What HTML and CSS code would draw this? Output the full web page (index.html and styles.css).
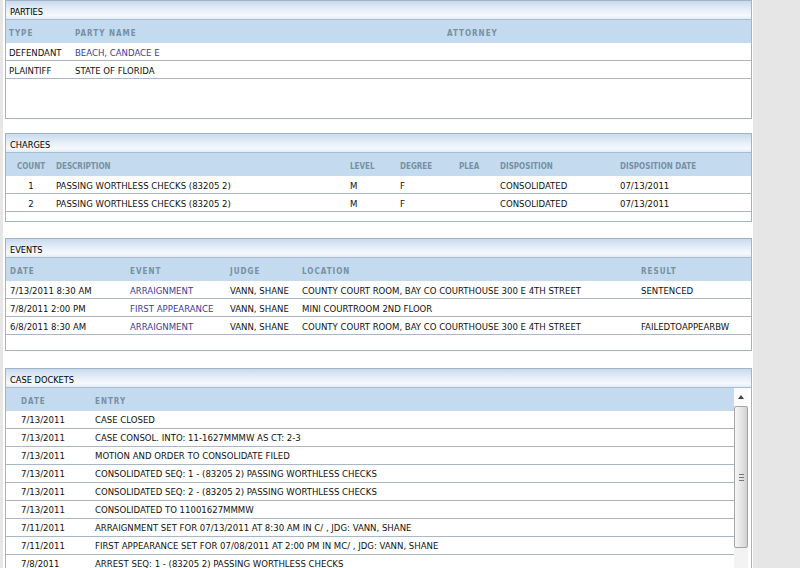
FILE: index.html
```html
<!DOCTYPE html>
<html>
<head>
	<meta charset="utf-8">
	<title>Case Detail</title>
	<link rel="stylesheet" href="styles.css">
</head>
<body>
	<div class="page">

		<div class="panel parties">
			<div class="panel-title">PARTIES</div>
			<div class="panel-body">
				<table class="grid">
					<tr class="head spaced">
						<th class="p-type">TYPE</th>
						<th class="p-name">PARTY NAME</th>
						<th>ATTORNEY</th>
					</tr>
					<tr>
						<td>DEFENDANT</td>
						<td><a href="#">BEACH, CANDACE E</a></td>
						<td></td>
					</tr>
					<tr>
						<td>PLAINTIFF</td>
						<td>STATE OF FLORIDA</td>
						<td></td>
					</tr>
				</table>
			</div>
		</div>

		<div class="panel charges">
			<div class="panel-title">CHARGES</div>
			<div class="panel-body">
				<table class="grid">
					<tr class="head">
						<th class="c-count">COUNT</th>
						<th class="c-desc">DESCRIPTION</th>
						<th class="c-level">LEVEL</th>
						<th class="c-degree">DEGREE</th>
						<th class="c-plea">PLEA</th>
						<th class="c-disp">DISPOSITION</th>
						<th>DISPOSITION DATE</th>
					</tr>
					<tr>
						<td class="c-count">1</td>
						<td>PASSING WORTHLESS CHECKS (83205 2)</td>
						<td>M</td>
						<td>F</td>
						<td></td>
						<td>CONSOLIDATED</td>
						<td>07/13/2011</td>
					</tr>
					<tr>
						<td class="c-count">2</td>
						<td>PASSING WORTHLESS CHECKS (83205 2)</td>
						<td>M</td>
						<td>F</td>
						<td></td>
						<td>CONSOLIDATED</td>
						<td>07/13/2011</td>
					</tr>
				</table>
			</div>
		</div>

		<div class="panel events">
			<div class="panel-title">EVENTS</div>
			<div class="panel-body">
				<table class="grid">
					<tr class="head spaced">
						<th class="e-date">DATE</th>
						<th class="e-event">EVENT</th>
						<th class="e-judge">JUDGE</th>
						<th class="e-loc">LOCATION</th>
						<th>RESULT</th>
					</tr>
					<tr>
						<td class="e-date">7/13/2011 8:30 AM</td>
						<td><a href="#">ARRAIGNMENT</a></td>
						<td>VANN, SHANE</td>
						<td>COUNTY COURT ROOM, BAY CO COURTHOUSE 300 E 4TH STREET</td>
						<td>SENTENCED</td>
					</tr>
					<tr>
						<td class="e-date">7/8/2011 2:00 PM</td>
						<td><a href="#">FIRST APPEARANCE</a></td>
						<td>VANN, SHANE</td>
						<td>MINI COURTROOM 2ND FLOOR</td>
						<td></td>
					</tr>
					<tr>
						<td class="e-date">6/8/2011 8:30 AM</td>
						<td><a href="#">ARRAIGNMENT</a></td>
						<td>VANN, SHANE</td>
						<td>COUNTY COURT ROOM, BAY CO COURTHOUSE 300 E 4TH STREET</td>
						<td>FAILEDTOAPPEARBW</td>
					</tr>
				</table>
			</div>
		</div>

		<div class="panel dockets">
			<div class="panel-title">CASE DOCKETS</div>
			<div class="docket-body">
				<div class="docket-list">
					<table class="grid">
						<tr class="head spaced">
							<th class="d-date">DATE</th>
							<th>ENTRY</th>
						</tr>
						<tr><td class="d-date">7/13/2011</td><td>CASE CLOSED</td></tr>
						<tr><td class="d-date">7/13/2011</td><td>CASE CONSOL. INTO: 11-1627MMMW AS CT: 2-3</td></tr>
						<tr><td class="d-date">7/13/2011</td><td>MOTION AND ORDER TO CONSOLIDATE FILED</td></tr>
						<tr><td class="d-date">7/13/2011</td><td>CONSOLIDATED SEQ: 1 - (83205 2) PASSING WORTHLESS CHECKS</td></tr>
						<tr><td class="d-date">7/13/2011</td><td>CONSOLIDATED SEQ: 2 - (83205 2) PASSING WORTHLESS CHECKS</td></tr>
						<tr><td class="d-date">7/13/2011</td><td>CONSOLIDATED TO 11001627MMMW</td></tr>
						<tr><td class="d-date">7/11/2011</td><td>ARRAIGNMENT SET FOR 07/13/2011 AT 8:30 AM IN C/ , JDG: VANN, SHANE</td></tr>
						<tr><td class="d-date">7/11/2011</td><td>FIRST APPEARANCE SET FOR 07/08/2011 AT 2:00 PM IN MC/ , JDG: VANN, SHANE</td></tr>
						<tr><td class="d-date">7/8/2011</td><td>ARREST SEQ: 1 - (83205 2) PASSING WORTHLESS CHECKS</td></tr>
					</table>
				</div>
				<div class="scrollbar">
					<div class="scroll-up"><span class="arrow"></span></div>
					<div class="scroll-thumb"><span class="grip"></span></div>
					<div class="scroll-track"></div>
				</div>
			</div>
		</div>

	</div>
</body>
</html>
```

FILE: styles.css
```css
*{
	padding: 0px;
	margin: 0px;
}
html, body{
	height: 568px;
	overflow: hidden;
}
body{
	background: #e6e6e6;
	font-family: "DejaVu Sans Condensed", "DejaVu Sans", sans-serif;
	font-stretch: condensed;
	font-size: 9.5px;
	color: #000;
}
.page{
	width: 750px;
	height: 568px;
	margin-left: 3px;
	padding-left: 2px;
	box-sizing: border-box;
	background: #fff;
}
.panel{
	width: 747px;
	box-sizing: border-box;
	border: 1px solid #9fb3c9;
	background: #fff;
}
.charges{
	margin-top: 14px;
}
.events{
	margin-top: 16px;
}
.dockets{
	margin-top: 17px;
}
.panel-title{
	height: 16px;
	padding-top: 2px;
	line-height: 18px;
	padding-left: 4px;
	font-size: 9.2px;
	border-bottom: 1px solid #a9bcd1;
	background: linear-gradient(to bottom, #c9dbef 0%, #e4edf7 45%, #f5f9fd 80%, #e2ebf5 100%);
}
.parties .panel-body{
	height: 98px;
}
.charges .panel-body{
	height: 68px;
}
.events .panel-body{
	height: 92px;
}

/* tables */
.grid{
	width: 100%;
	border-collapse: separate;
	border-spacing: 0;
}
.grid th{
	height: 20px;
	padding: 3px 3px 0 3px;
	text-align: left;
	font-size: 8px;
	font-weight: bold;
	color: #7890a2;
	background: #c3daef;
	white-space: nowrap;
}
.grid .spaced th{
	letter-spacing: 1px;
}
.grid td{
	line-height: 15px;
	padding: 2px 3px 0 3px;
	border-bottom: 1px solid #a8b8c9;
	white-space: nowrap;
	color: #111;
}
.grid a{
	color: #3c3c9a;
	text-decoration: none;
}

/* parties */
.p-type{
	width: 60px;
}
.p-name{
	width: 366px;
}

/* charges */
.grid .c-count{
	width: 38px;
	text-align: center;
	padding-left: 6px;
}
.c-desc{
	width: 288px;
}
.c-level{
	width: 44px;
}
.c-degree{
	width: 53px;
}
.c-plea{
	width: 35px;
}
.c-disp{
	width: 114px;
}

/* events */
.grid .e-date{
	width: 114px;
	padding-left: 4px;
}
.e-event{
	width: 94px;
}
.e-judge{
	width: 66px;
}
.e-loc{
	width: 333px;
}

/* dockets */
.docket-body{
	display: flex;
	height: 200px;
	overflow: hidden;
	padding-right: 3px;
}
.docket-list{
	flex: 1;
	overflow: hidden;
}
.docket-list td{
	padding-top: 1px;
	line-height: 16px;
}
.grid .d-date{
	width: 68px;
	padding-left: 15px;
}
.scrollbar{
	width: 14px;
	display: flex;
	flex-direction: column;
	background: #f3f3f3;
}
.scroll-up{
	height: 18px;
	display: flex;
	justify-content: center;
	align-items: center;
	background: #fafafa;
}
.arrow{
	width: 0;
	height: 0;
	border-left: 3px solid transparent;
	border-right: 3px solid transparent;
	border-bottom: 4px solid #444;
}
.scroll-thumb{
	height: 140px;
	border: 1px solid #a5a5a5;
	border-radius: 2px;
	background: linear-gradient(to right, #f7f7f7, #e2e2e2 60%, #d2d2d2);
	display: flex;
	justify-content: center;
	align-items: center;
}
.grip{
	width: 5px;
	height: 5px;
	border-top: 1px solid #777;
	border-bottom: 1px solid #777;
	background: linear-gradient(to bottom, transparent 2px, #777 2px, #777 3px, transparent 3px);
}
.scroll-track{
	flex: 1;
}
```
